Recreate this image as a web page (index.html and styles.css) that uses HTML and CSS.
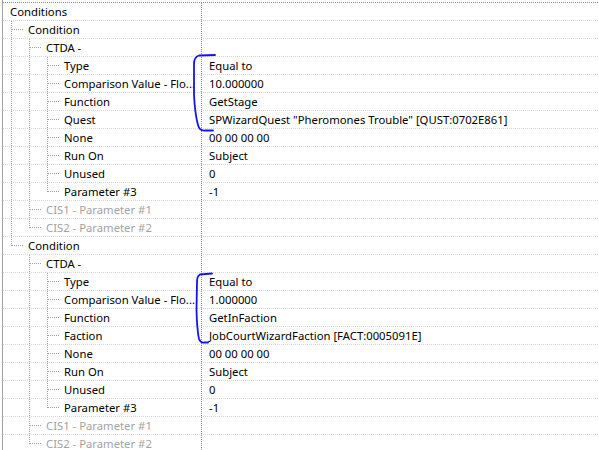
FILE: index.html
```html
<!DOCTYPE html>
<html lang="en">
<head>
    <meta charset="UTF-8">
    <meta name="viewport" content="width=device-width, initial-scale=1.0">
    <title>Conditions</title>
    <link rel="stylesheet" href="styles.css">
</head>
<body>

    <div class="frame">
        <div class="tree">
            <!-- first condition -->
            <div class="row"><div class="name"><span class="label">Conditions</span></div><div class="value"></div></div>
            <div class="row"><div class="name"><span class="g tee"></span><span class="label">Condition</span></div><div class="value"></div></div>
            <div class="row"><div class="name"><span class="g pipe"></span><span class="g tee"></span><span class="label">CTDA -</span></div><div class="value"></div></div>
            <div class="row"><div class="name"><span class="g pipe"></span><span class="g pipe"></span><span class="g tee"></span><span class="label">Type</span></div><div class="value">Equal to</div></div>
            <div class="row"><div class="name"><span class="g pipe"></span><span class="g pipe"></span><span class="g tee"></span><span class="label">Comparison Value - Flo...</span></div><div class="value">10.000000</div></div>
            <div class="row"><div class="name"><span class="g pipe"></span><span class="g pipe"></span><span class="g tee"></span><span class="label">Function</span></div><div class="value">GetStage</div></div>
            <div class="row"><div class="name"><span class="g pipe"></span><span class="g pipe"></span><span class="g tee"></span><span class="label">Quest</span></div><div class="value">SPWizardQuest "Pheromones Trouble" [QUST:0702E861]</div></div>
            <div class="row"><div class="name"><span class="g pipe"></span><span class="g pipe"></span><span class="g tee"></span><span class="label">None</span></div><div class="value">00 00 00 00</div></div>
            <div class="row"><div class="name"><span class="g pipe"></span><span class="g pipe"></span><span class="g tee"></span><span class="label">Run On</span></div><div class="value">Subject</div></div>
            <div class="row"><div class="name"><span class="g pipe"></span><span class="g pipe"></span><span class="g tee"></span><span class="label">Unused</span></div><div class="value">0</div></div>
            <div class="row"><div class="name"><span class="g pipe"></span><span class="g pipe"></span><span class="g end"></span><span class="label">Parameter #3</span></div><div class="value">-1</div></div>
            <div class="row"><div class="name"><span class="g pipe"></span><span class="g tee"></span><span class="label muted">CIS1 - Parameter #1</span></div><div class="value"></div></div>
            <div class="row"><div class="name"><span class="g pipe"></span><span class="g end"></span><span class="label muted">CIS2 - Parameter #2</span></div><div class="value"></div></div>

            <!-- second condition -->
            <div class="row"><div class="name"><span class="g end"></span><span class="label">Condition</span></div><div class="value"></div></div>
            <div class="row"><div class="name"><span class="g"></span><span class="g tee"></span><span class="label">CTDA -</span></div><div class="value"></div></div>
            <div class="row"><div class="name"><span class="g"></span><span class="g pipe"></span><span class="g tee"></span><span class="label">Type</span></div><div class="value">Equal to</div></div>
            <div class="row"><div class="name"><span class="g"></span><span class="g pipe"></span><span class="g tee"></span><span class="label">Comparison Value - Flo...</span></div><div class="value">1.000000</div></div>
            <div class="row"><div class="name"><span class="g"></span><span class="g pipe"></span><span class="g tee"></span><span class="label">Function</span></div><div class="value">GetInFaction</div></div>
            <div class="row"><div class="name"><span class="g"></span><span class="g pipe"></span><span class="g tee"></span><span class="label">Faction</span></div><div class="value">JobCourtWizardFaction [FACT:0005091E]</div></div>
            <div class="row"><div class="name"><span class="g"></span><span class="g pipe"></span><span class="g tee"></span><span class="label">None</span></div><div class="value">00 00 00 00</div></div>
            <div class="row"><div class="name"><span class="g"></span><span class="g pipe"></span><span class="g tee"></span><span class="label">Run On</span></div><div class="value">Subject</div></div>
            <div class="row"><div class="name"><span class="g"></span><span class="g pipe"></span><span class="g tee"></span><span class="label">Unused</span></div><div class="value">0</div></div>
            <div class="row"><div class="name"><span class="g"></span><span class="g pipe"></span><span class="g end"></span><span class="label">Parameter #3</span></div><div class="value">-1</div></div>
            <div class="row"><div class="name"><span class="g"></span><span class="g tee"></span><span class="label muted">CIS1 - Parameter #1</span></div><div class="value"></div></div>
            <div class="row"><div class="name"><span class="g"></span><span class="g end"></span><span class="label muted">CIS2 - Parameter #2</span></div><div class="value"></div></div>
        </div>

        <!-- hand-drawn brackets on top of the screenshot -->
        <svg class="marks" width="599" height="450" viewBox="0 0 599 450">
            <path d="M215 55 L199 55.5 Q194 57 194 64 L194 95 Q195 114 198 125 Q199.5 131 205 130.5 L213 130.5" />
            <path d="M212 273.5 L200 274.5 Q197 276 197 282 L196.5 310 Q197 330 199 339 Q200.5 343 204 342.5 L208 342.5" />
        </svg>
    </div>

</body>
</html>
```
FILE: styles.css
```css
body {
    margin: 0;
    padding: 0;
    background: #fff;
    font-family: 'Noto Sans', sans-serif;
    font-size: 11.3px;
    color: #000;
    overflow: hidden;
}

.frame {
    position: relative;
    width: 596px;
    height: 450px;
    margin-left: 2px;
    padding-top: 2px;
    border-left: 1px solid #a0a0a0;
    box-sizing: border-box;
    overflow: hidden;
}

/* dotted top rule of the tree */
.tree {
    padding-top: 1px;
    background: repeating-linear-gradient(to right, #8c8c8c 0 1px, transparent 1px 2px) left top / 100% 1px no-repeat;
}

.row {
    display: flex;
    height: 18px;
    background: repeating-linear-gradient(to right, #d6d6d6 0 1px, transparent 1px 2px) left bottom / 100% 1px no-repeat;
}

.name {
    display: flex;
    width: 199px;
    flex: none;
    padding-left: 7px;
    box-sizing: border-box;
    white-space: nowrap;
    overflow: hidden;
    /* column divider */
    background: repeating-linear-gradient(to bottom, #8c8c8c 0 1px, transparent 1px 2px) right top / 1px 18px no-repeat;
}

.label,
.value {
    line-height: 17px;
    white-space: nowrap;
}

.value {
    padding-left: 7px;
}

.muted {
    color: #a3a3a3;
}

/* tree guide lines */
.g {
    display: block;
    width: 18px;
    height: 18px;
    flex: none;
}

.pipe {
    background: repeating-linear-gradient(to bottom, #a0a0a0 0 1px, transparent 1px 2px) 1px 0 / 1px 18px no-repeat;
}

.tee {
    background:
        repeating-linear-gradient(to right, #a0a0a0 0 1px, transparent 1px 2px) 2px 8px / 11px 1px no-repeat,
        repeating-linear-gradient(to bottom, #a0a0a0 0 1px, transparent 1px 2px) 1px 0 / 1px 18px no-repeat;
}

.end {
    background:
        repeating-linear-gradient(to right, #a0a0a0 0 1px, transparent 1px 2px) 2px 8px / 11px 1px no-repeat,
        repeating-linear-gradient(to bottom, #a0a0a0 0 1px, transparent 1px 2px) 1px 0 / 1px 9px no-repeat;
}

.marks {
    position: absolute;
    left: -3px;
    top: 0;
    pointer-events: none;
}

.marks path {
    fill: none;
    stroke: #1414f0;
    stroke-width: 1.8;
    stroke-linecap: round;
    stroke-linejoin: round;
}
```
